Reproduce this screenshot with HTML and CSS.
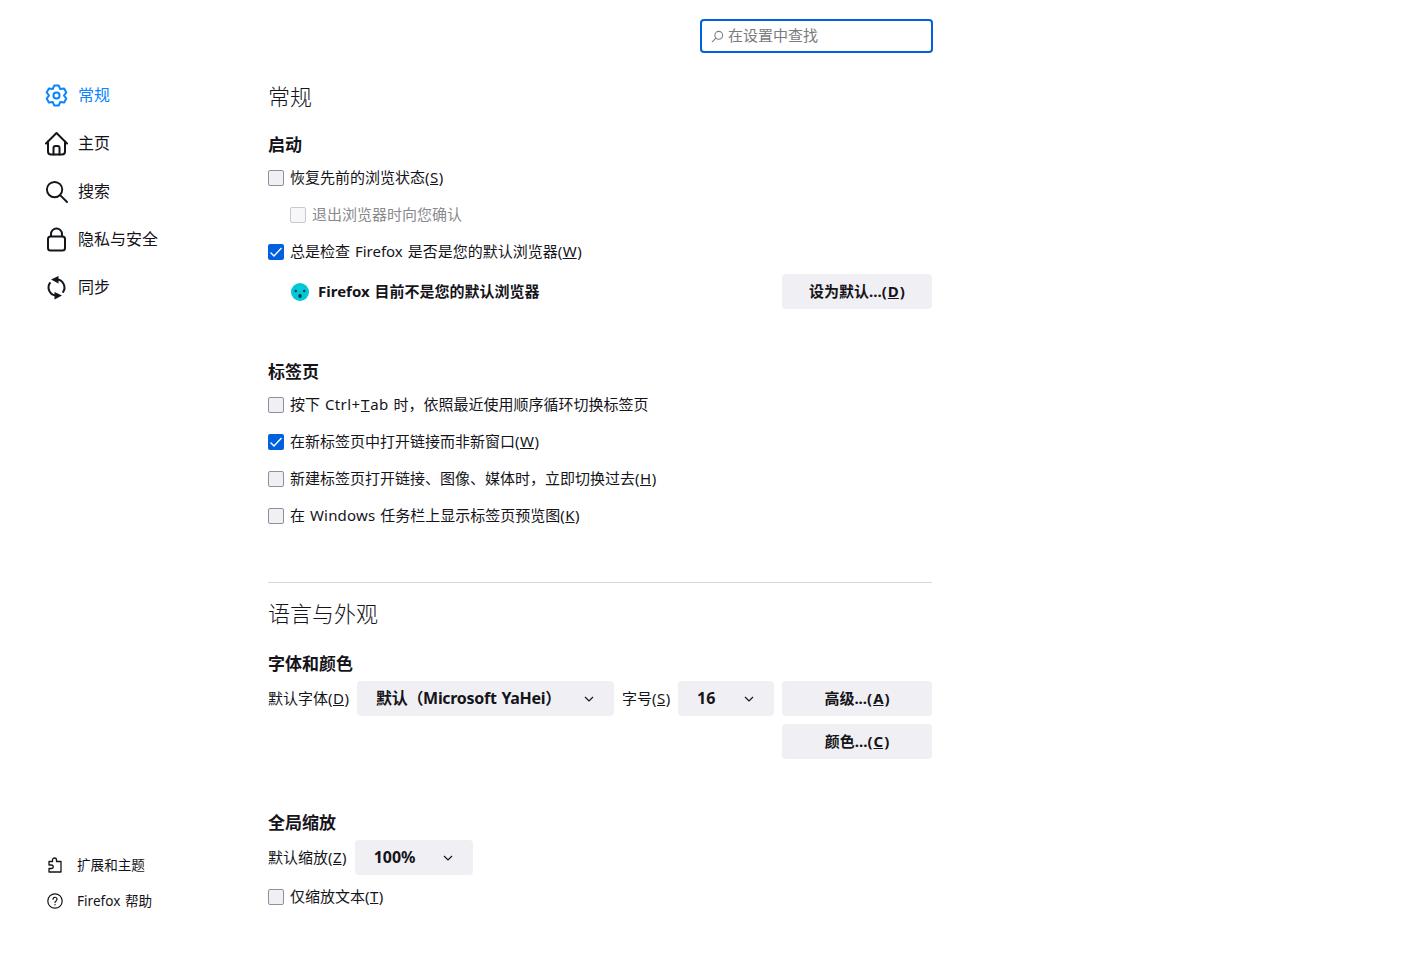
FILE: index.html
```html
<!DOCTYPE html>
<html lang="zh-CN">
<head>
    <meta charset="UTF-8">
    <title>设置</title>
    <link rel="stylesheet" href="styles.css">
</head>
<body>
    <div class="page">
        <div class="sidebar">
            <div class="nav-list">
                <a class="nav-item active" href="#">
                    <svg class="nav-icon" viewBox="0 0 24 24" fill="none" stroke="currentColor" stroke-width="2.100" stroke-linejoin="round"><path d="M9.700 1.500h4.600l1.600 3.750 4.050-.5 2.300 4L19.800 12l2.450 3.250-2.300 4-4.050-.5-1.600 3.750H9.700l-1.600-3.750-4.050.5-2.300-4L4.200 12 1.750 8.750l2.300-4 4.050.5z"/><circle cx="12" cy="12" r="3.200"/></svg>
                    <span>常规</span>
                </a>
                <a class="nav-item" href="#">
                    <svg class="nav-icon" viewBox="0 0 23 23" fill="none" stroke="currentColor" stroke-width="2" stroke-linejoin="round" stroke-linecap="round"><path d="M1 11.500 11.500 1 22 11.500"/><path d="M3 9.500v10a3 3 0 0 0 3 3h11a3 3 0 0 0 3-3v-10"/><path d="M8.500 22.500V16a2 2 0 0 1 2-2h2a2 2 0 0 1 2 2v6.500"/></svg>
                    <span>主页</span>
                </a>
                <a class="nav-item" href="#">
                    <svg class="nav-icon" viewBox="0 0 24 24" fill="none" stroke="currentColor" stroke-width="2" stroke-linecap="round"><circle cx="10" cy="10" r="8"/><path d="m16 16 7 7"/></svg>
                    <span>搜索</span>
                </a>
                <a class="nav-item" href="#">
                    <svg class="nav-icon" viewBox="0 0 23 23" fill="none" stroke="currentColor" stroke-width="2"><rect x="3" y="8.500" width="17" height="14" rx="2.500"/><path d="M6 8.500V6a5.500 5.500 0 0 1 11 0v2.500"/></svg>
                    <span>隐私与安全</span>
                </a>
                <a class="nav-item" href="#">
                    <svg class="nav-icon" viewBox="0 0 23 23" fill="none" stroke="currentColor" stroke-width="2"><path d="M11.500 3.500a8 8 0 0 1 6.100 13.100"/><path d="M11.500 19.500a8 8 0 0 1-6.100-13.100"/><path d="M6 3.500 13.500 0v7.500zM17 19.500 9.500 16v7.500z" fill="currentColor" stroke="none"/></svg>
                    <span>同步</span>
                </a>
            </div>
            <div class="nav-bottom">
                <a class="nav-small" href="#">
                    <svg class="small-icon" viewBox="0 0 16 16" fill="none" stroke="currentColor" stroke-width="1.300" stroke-linejoin="round"><path d="M2 4.500h3.500V3a2 2 0 0 1 4 0v1.500h4.500V15H2v-3.500h2.500a1.500 1.500 0 0 0 0-3.500H2z"/></svg>
                    <span>扩展和主题</span>
                </a>
                <a class="nav-small" href="#">
                    <svg class="small-icon" viewBox="0 0 16 16" fill="none" stroke="currentColor" stroke-width="1.200" stroke-linecap="round"><circle cx="8" cy="8" r="7.200"/><path d="M6 6.300a2 2 0 1 1 3 1.700c-.7.400-1 .8-1 1.600"/><circle cx="8" cy="11.800" r=".7" fill="currentColor" stroke="none"/></svg>
                    <span>Firefox 帮助</span>
                </a>
            </div>
        </div>

        <div class="main">
            <div class="search-row">
                <div class="search-box">
                    <svg class="search-icon" viewBox="0 0 16 16" fill="none" stroke="currentColor" stroke-width="1.300" stroke-linecap="round"><circle cx="9.500" cy="6.500" r="4.800"/><path d="m6 10-4.500 4.500"/></svg>
                    <span>在设置中查找</span>
                </div>
            </div>

            <h1 class="page-title">常规</h1>

            <h2 class="group-title first">启动</h2>
            <label class="check-row"><span class="box"></span><span>恢复先前的浏览状态(<u>S</u>)</span></label>
            <label class="check-row sub disabled"><span class="box"></span><span>退出浏览器时向您确认</span></label>
            <label class="check-row"><span class="box checked"><svg viewBox="0 0 16 16" fill="none" stroke="#fff" stroke-width="1.400"><path d="m2.500 8.500 3.500 3.500 7.500-8"/></svg></span><span>总是检查 Firefox 是否是您的默认浏览器(<u>W</u>)</span></label>
            <div class="default-row">
                <svg class="sad-icon" viewBox="0 0 18 18"><circle cx="9" cy="9" r="9" fill="#00c8d7"/><circle cx="4.800" cy="8" r="1.200" fill="#15343f"/><circle cx="13.200" cy="8" r="1.200" fill="#15343f"/><ellipse cx="9" cy="13" rx="1.700" ry="2" fill="#15343f"/></svg>
                <b class="default-text">Firefox 目前不是您的默认浏览器</b>
                <button class="btn">设为默认...(<u>D</u>)</button>
            </div>

            <h2 class="group-title tabs">标签页</h2>
            <label class="check-row"><span class="box"></span><span>按下 <span class="ctrl">Ctrl+<u>T</u>ab</span> 时，依照最近使用顺序循环切换标签页</span></label>
            <label class="check-row"><span class="box checked"><svg viewBox="0 0 16 16" fill="none" stroke="#fff" stroke-width="1.400"><path d="m2.500 8.500 3.500 3.500 7.500-8"/></svg></span><span>在新标签页中打开链接而非新窗口(<u>W</u>)</span></label>
            <label class="check-row"><span class="box"></span><span>新建标签页打开链接、图像、媒体时，立即切换过去(<u>H</u>)</span></label>
            <label class="check-row"><span class="box"></span><span>在 <span class="win">Windows</span> 任务栏上显示标签页预览图(<u>K</u>)</span></label>

            <hr class="divider">

            <h1 class="page-title lang">语言与外观</h1>

            <h2 class="group-title fonts">字体和颜色</h2>
            <div class="font-row">
                <span class="font-label">默认字体(<u>D</u>)</span>
                <div class="select font-select"><b>默认（Microsoft YaHei）</b><svg class="chevron" viewBox="0 0 10 6" fill="none" stroke="currentColor" stroke-width="1.200"><path d="m1 1 4 4 4-4"/></svg></div>
                <span class="size-label">字号(<u>S</u>)</span>
                <div class="select size-select"><b>16</b><svg class="chevron" viewBox="0 0 10 6" fill="none" stroke="currentColor" stroke-width="1.200"><path d="m1 1 4 4 4-4"/></svg></div>
                <button class="btn">高级...(<u>A</u>)</button>
            </div>
            <div class="color-row"><button class="btn">颜色...(<u>C</u>)</button></div>

            <h2 class="group-title zoom">全局缩放</h2>
            <div class="zoom-row">
                <span>默认缩放(<u>Z</u>)</span>
                <div class="select zoom-select"><b>100%</b><svg class="chevron" viewBox="0 0 10 6" fill="none" stroke="currentColor" stroke-width="1.200"><path d="m1 1 4 4 4-4"/></svg></div>
            </div>
            <label class="check-row"><span class="box"></span><span>仅缩放文本(<u>T</u>)</span></label>
        </div>
    </div>
</body>
</html>
```

FILE: styles.css
```css
body {
    margin: 0;
    background-color: white;
    color: #15141a;
    font-family: "Noto Sans", "Noto Sans CJK SC", sans-serif;
    font-size: 15px;
    line-height: 22px;
    word-spacing: 1px;
}

u {
    margin: 0 .5px;
}

.page {
    display: flex;
    height: 955px;
    overflow: hidden;
}

/* sidebar */
.sidebar {
    width: 268px;
    height: 955px;
    flex-shrink: 0;
    display: flex;
    flex-direction: column;
    justify-content: space-between;
    padding: 71px 0 42px 45px;
    box-sizing: border-box;
}
.nav-list {
    display: flex;
    flex-direction: column;
}
.nav-item {
    display: flex;
    align-items: center;
    gap: 10px;
    height: 48px;
    color: #15141a;
    text-decoration: none;
    font-size: 16px;
}
.nav-item.active {
    color: #0a84ff;
}
.nav-icon {
    width: 23px;
    height: 23px;
    overflow: visible;
}
.nav-bottom {
    display: flex;
    flex-direction: column;
    gap: 12px;
}
.nav-small {
    display: flex;
    align-items: center;
    gap: 14px;
    height: 24px;
    margin-left: 2px;
    color: #15141a;
    text-decoration: none;
    font-size: 13.6px;
}
.small-icon {
    width: 16px;
    height: 16px;
}

/* main column */
.main {
    width: 664px;
    padding-top: 19px;
}
.search-row {
    display: flex;
    justify-content: flex-end;
    margin-right: -1px;
}
.search-box {
    width: 233px;
    height: 34px;
    box-sizing: border-box;
    border: 2px solid #0060df;
    border-radius: 4px;
    display: flex;
    align-items: center;
    gap: 4px;
    padding-left: 9px;
    color: #7b7b80;
}
.search-box span {
    padding-bottom: 2px;
}
.search-icon {
    width: 13px;
    height: 13px;
}
.page-title {
    margin: 28px 0 0;
    font-size: 22px;
    line-height: 30px;
    font-weight: 300;
}
.page-title.lang {
    margin-top: 15px;
}
.group-title {
    margin: 0 0 10px;
    font-size: 17px;
    line-height: 24px;
    font-weight: 700;
}
.group-title.first {
    margin-top: 22px;
}
.group-title.tabs {
    margin-top: 51px;
}
.group-title.fonts {
    margin-top: 24px;
    margin-bottom: 5px;
}
.group-title.zoom {
    margin-top: 52px;
    margin-bottom: 5px;
}

.check-row {
    display: flex;
    align-items: center;
    gap: 6px;
    height: 22px;
    margin-bottom: 15px;
}
.check-row > span:last-child {
    padding-bottom: 2px;
}
.check-row.sub {
    margin-left: 22px;
}
.check-row.disabled {
    color: #8a8a8e;
}
.box {
    width: 16px;
    height: 16px;
    box-sizing: border-box;
    border: 1px solid #8f8f9d;
    border-radius: 2px;
    background-color: #f0f0f4;
    flex-shrink: 0;
}
.disabled .box {
    border-color: #c8c8cd;
    background-color: #f7f7f9;
}
.box.checked {
    border: none;
    background-color: #0060df;
}
.box svg {
    display: block;
}
.ctrl {
    letter-spacing: .4px;
}
.win {
    letter-spacing: .2px;
}

.default-row {
    display: flex;
    align-items: center;
    margin-left: 22px;
    margin-top: -4px;
}
.sad-icon {
    width: 18px;
    height: 18px;
    margin: 0 9px 0 1px;
}
.default-text {
    flex: 1;
    padding-bottom: 2px;
}
.btn {
    width: 150px;
    height: 35px;
    padding: 0 0 2px;
    border: none;
    border-radius: 4px;
    background-color: #f0f0f4;
    color: #15141a;
    font-family: inherit;
    font-size: 15px;
    font-weight: 700;
    flex-shrink: 0;
}
.btn u {
    margin: 0 1px;
}

.divider {
    margin: 55px 0 0;
    border: none;
    border-top: 1px solid #d7d7db;
}

.font-row, .zoom-row {
    display: flex;
    align-items: center;
    gap: 8px;
    white-space: nowrap;
}
.font-row > span, .zoom-row > span, .select b {
    padding-bottom: 2px;
}
.font-label {
    width: 81px;
    flex-shrink: 0;
}
.size-label {
    width: 48px;
    flex-shrink: 0;
}
.font-row .btn {
    margin-left: auto;
}
.color-row {
    display: flex;
    justify-content: flex-end;
    margin-top: 8px;
}
.select {
    height: 35px;
    box-sizing: border-box;
    border-radius: 4px;
    background-color: #f0f0f4;
    display: flex;
    align-items: center;
    justify-content: space-between;
    flex-shrink: 0;
    padding: 0 20px 0 19px;
    font-size: 16px;
}
.font-select {
    width: 257px;
    letter-spacing: -.3px;
}
.size-select {
    width: 96px;
}
.zoom-select {
    width: 118px;
}
.chevron {
    width: 10px;
    height: 6px;
}
.zoom-row {
    margin-bottom: 11px;
}
```
